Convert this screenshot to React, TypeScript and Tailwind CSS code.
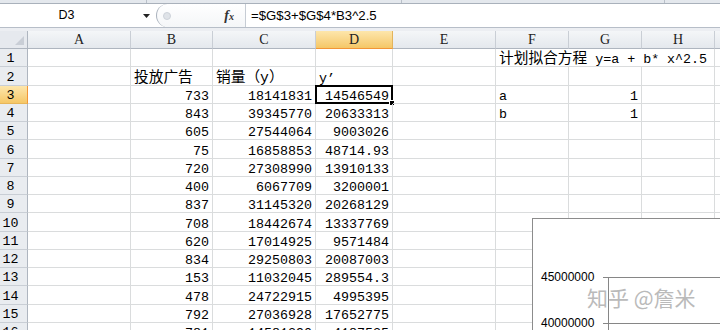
import React from "react";

const mono = "font-[family-name:'Liberation_Mono','Noto_Sans_CJK_SC',monospace]";
const sans = "font-[family-name:'Liberation_Sans','Noto_Sans_CJK_SC',sans-serif]";
const serif = "font-[family-name:'Liberation_Serif',serif]";

const cols = [
  { id: "A", w: "w-[103px]" },
  { id: "B", w: "w-[82px]" },
  { id: "C", w: "w-[103px]" },
  { id: "D", w: "w-[77px]" },
  { id: "E", w: "w-[103px]" },
  { id: "F", w: "w-[73px]" },
  { id: "G", w: "w-[73px]" },
  { id: "H", w: "w-[73px]" },
  { id: "I", w: "w-[73px]" },
];

// B, C, D for rows 3..16
const data: [string, string, string][] = [
  ["733", "18141831", "14546549"],
  ["843", "39345770", "20633313"],
  ["605", "27544064", "9003026"],
  ["75", "16858853", "48714.93"],
  ["720", "27308990", "13910133"],
  ["400", "6067709", "3200001"],
  ["837", "31145320", "20268129"],
  ["708", "18442674", "13337769"],
  ["620", "17014925", "9571484"],
  ["834", "29250803", "20087003"],
  ["153", "11032045", "289554.3"],
  ["478", "24722915", "4995395"],
  ["792", "27036928", "17652775"],
  ["781", "14581290", "4187535"],
];

type CellVal = { v?: React.ReactNode; right?: boolean };

function buildRow(n: number): Record<string, CellVal> {
  const r: Record<string, CellVal> = {};
  if (n === 2) {
    r.B = { v: <span className="text-[14.7px]">投放广告</span> };
    r.C = { v: <span className="text-[14.7px]">销量（y）</span> };
    r.D = { v: "y’" };
  }
  if (n >= 3) {
    const d = data[n - 3];
    r.B = { v: d[0], right: true };
    r.C = { v: d[1], right: true };
    r.D = { v: d[2], right: true };
  }
  if (n === 3) {
    r.F = { v: "a" };
    r.G = { v: "1", right: true };
  }
  if (n === 4) {
    r.F = { v: "b" };
    r.G = { v: "1", right: true };
  }
  return r;
}

function RowHeader({ n }: { n: number }) {
  const active = n === 3;
  return (
    <div
      className={`w-[28px] h-full shrink-0 flex items-end justify-center pr-[6px] pb-[1px] border-r border-b ${
        active
          ? "bg-linear-to-b from-[#fde6ab] to-[#f5c766] border-r-[#f29536] border-b-[#e7b65a]"
          : "bg-[#e9ecf0] border-r-[#aeb5bf] border-b-[#c9ced5]"
      }`}
    >
      {n}
    </div>
  );
}

function Row({ n }: { n: number }) {
  const cells = buildRow(n);
  return (
    <div className="flex h-[18.27px] shrink-0">
      <RowHeader n={n} />
      {cols.map((c) => {
        if (n === 1 && (c.id === "G" || c.id === "H")) return null;
        if (n === 1 && c.id === "F") {
          return (
            <div
              key={c.id}
              className="w-[219px] h-full shrink-0 flex items-end pl-[3px] border-r border-b border-[#dadcdd] whitespace-pre"
            >
              <span>
                <span className="text-[14.7px]">计划拟合方程</span>
                {" y=a + b* x^2.5"}
              </span>
            </div>
          );
        }
        const cell = cells[c.id] || {};
        const active = n === 3 && c.id === "D";
        return (
          <div
            key={c.id}
            className={`${c.w} h-full shrink-0 relative flex items-end px-[3px] border-r border-b border-[#dadcdd] whitespace-nowrap ${
              cell.right ? "justify-end" : ""
            }`}
          >
            {cell.v}
            {active && (
              <>
                <span className="absolute -left-[1px] -top-[1px] -right-[1px] -bottom-[1px] border-2 border-black" />
                <span className="absolute -right-[3px] -bottom-[3px] w-[6px] h-[6px] bg-black border border-white" />
              </>
            )}
          </div>
        );
      })}
    </div>
  );
}

export default function App() {
  return (
    <div className={`w-[720px] h-[330px] overflow-hidden bg-white relative ${sans}`}>
      {/* ribbon edge */}
      <div className="h-[4px] flex bg-[#e4e8ed] border-b border-[#a9b1bb]">
        <div className="w-[147px] border-r border-[#b9c0c9]" />
        <div className="w-[255px] border-r border-[#b9c0c9]" />
        <div className="w-[263px] border-r border-[#b9c0c9]" />
      </div>

      {/* formula bar */}
      <div className="h-[24px] flex bg-white border-b border-[#b7bec8]">
        <div className="w-[133px] flex items-center justify-center text-[12.5px] text-black">D3</div>
        <div className="w-[23px] flex items-center pl-[10px]">
          <svg width="7" height="4" viewBox="0 0 7 4">
            <path d="M0 0h7L3.5 4z" fill="#222" />
          </svg>
        </div>
        <div className="w-[89px] flex items-center rounded-l-full border-l border-[#a9b1bc] bg-linear-to-b from-white to-[#f4f6f8]">
          <span className="ml-[6px] w-[8px] h-[8px] rounded-full bg-[#dfe3e8] border border-[#cdd2d9]" />
          <span className={`ml-auto mr-[11px] italic font-bold ${serif} text-[14px] text-[#333] leading-none`}>
            f<span className="text-[10px]">x</span>
          </span>
        </div>
        <div className="flex-1 flex items-center pl-[5px] border-l border-[#c6ccd4] text-[13.2px] text-black">
          =$G$3+$G$4*B3^2.5
        </div>
      </div>
      <div className="h-[3px] bg-[#eceef2]" />

      {/* grid */}
      <div className={`flex flex-col ${mono} text-[13.33px] leading-[13px] text-black`}>
        <div className={`flex h-[18px] shrink-0 ${serif} text-[14px]`}>
          <div className="w-[28px] h-full shrink-0 relative bg-[#e6e9ee] border-r border-b border-[#aeb5bf]">
            <svg className="absolute right-[3px] bottom-[3px]" width="9" height="9" viewBox="0 0 9 9">
              <path d="M9 0V9H0z" fill="#c9ced6" />
            </svg>
          </div>
          {cols.map((c) =>
            c.id === "D" ? (
              <div
                key={c.id}
                className={`${c.w} h-full shrink-0 flex items-center justify-center bg-linear-to-b from-[#fde6ab] to-[#f5c766] border-r border-[#e3b45c] border-b border-b-[#f29536] text-[#222]`}
              >
                {c.id}
              </div>
            ) : (
              <div
                key={c.id}
                className={`${c.w} h-full shrink-0 flex items-center justify-center bg-linear-to-b from-[#f4f6f8] to-[#e4e8ed] border-r border-[#c9ced5] border-b border-b-[#aeb5bf] text-[#222]`}
              >
                {c.id}
              </div>
            )
          )}
        </div>
        {Array.from({ length: 16 }, (_, i) => (
          <Row key={i} n={i + 1} />
        ))}
      </div>

      {/* chart */}
      <div className="absolute left-[532px] top-[218px] w-[210px] h-[130px] border border-[#8c8c8c] bg-white">
        <svg width="210" height="130" className="block">
          <text x="8" y="62" fontSize="12" fontFamily="Liberation Sans, Arial, sans-serif" fill="#000">
            45000000
          </text>
          <line x1="70" y1="58.5" x2="76" y2="58.5" stroke="#868686" />
          <rect x="75.5" y="58.5" width="200" height="200" fill="none" stroke="#868686" />
          <line x1="70" y1="104.5" x2="210" y2="104.5" stroke="#868686" />
          <text x="8" y="108" fontSize="12" fontFamily="Liberation Sans, Arial, sans-serif" fill="#000">
            40000000
          </text>
        </svg>
      </div>

      {/* watermark */}
      <div className="absolute left-[587px] top-[285px] text-[21px] leading-[24px] text-[#bababa] font-[family-name:'Noto_Sans_CJK_SC',sans-serif] whitespace-nowrap">
        知乎 @詹米
      </div>
    </div>
  );
}
